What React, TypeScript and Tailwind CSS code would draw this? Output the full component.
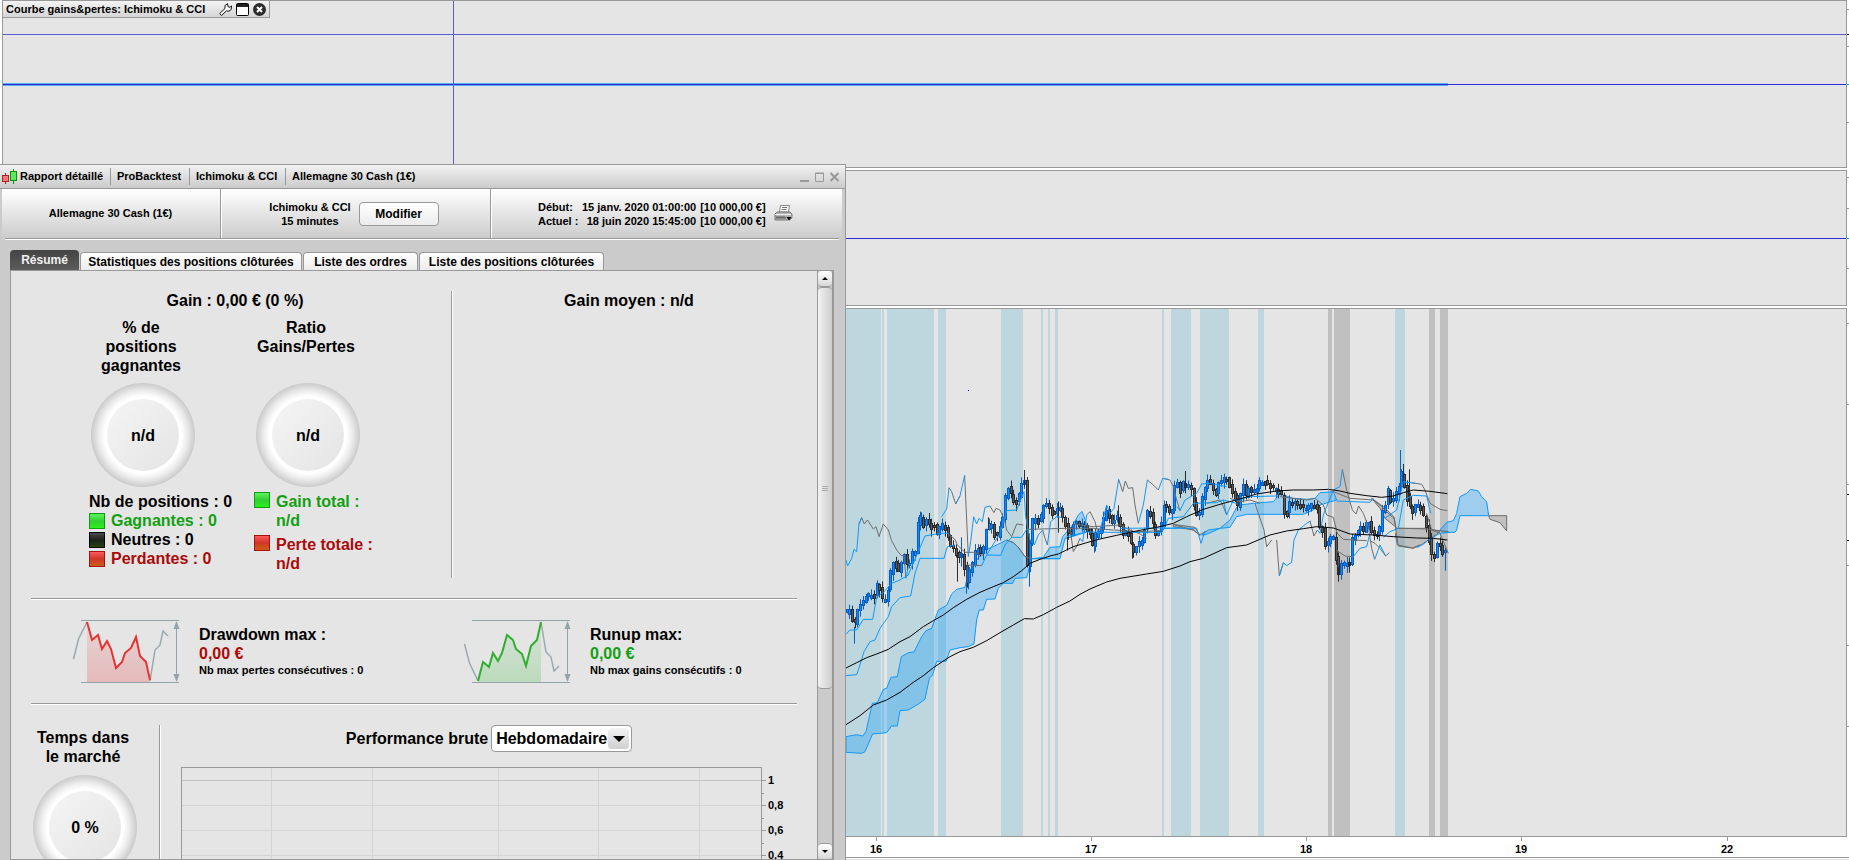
import { useState } from "react";

// Plot units of the price chart: three per pixel, both ways.
const BLUE_BANDS = [
  [0, 123], [126, 132], [141, 282], [294, 318], [483, 549], [603, 609], [624, 630], [645, 654],
  [966, 972], [993, 1053], [1080, 1167], [1254, 1272], [1665, 1695],
];
const GREY_BANDS = [[1464, 1476], [1482, 1530], [1767, 1785], [1800, 1824]];

const PRICES = [
  [20, 940], [28, 930], [36, 950], [43, 982], [52, 940], [58, 910], [68, 912], [75, 890], [95, 888], [104, 888],
  [110, 855], [118, 860], [125, 895], [133, 905], [140, 895], [147, 850], [155, 800], [162, 785], [170, 800],
  [178, 815], [186, 785], [195, 768], [203, 798], [212, 785], [220, 750], [228, 758], [234, 678], [243, 650],
  [250, 675], [262, 660], [272, 680], [285, 682], [295, 705], [303, 675], [313, 672], [322, 705], [332, 735],
  [342, 750], [350, 768], [362, 765], [370, 770], [375, 820], [381, 845], [390, 815], [400, 782], [410, 745],
  [420, 755], [432, 745], [438, 690], [447, 680], [455, 675], [465, 710], [475, 705], [483, 670], [492, 635],
  [500, 560], [510, 570], [518, 600], [527, 612], [537, 590], [545, 555], [552, 522], [557, 590], [562, 795],
  [568, 780], [574, 650], [582, 672], [590, 650], [598, 672], [605, 640], [610, 615], [630, 622], [640, 650],
  [648, 635], [656, 620], [665, 640], [673, 660], [682, 690], [690, 718], [698, 672], [715, 670], [735, 685],
  [748, 690], [757, 738], [765, 710], [775, 700], [785, 680], [793, 655], [802, 628], [812, 660], [820, 675],
  [830, 645], [838, 670], [850, 700], [862, 695], [872, 725], [880, 758], [890, 740], [900, 730], [910, 722],
  [918, 665], [924, 630], [935, 650], [943, 690], [948, 705], [958, 690], [966, 668], [971, 615], [985, 630],
  [995, 645], [1002, 580], [1010, 538], [1020, 575], [1033, 540], [1040, 565], [1053, 558], [1062, 610],
  [1075, 665], [1083, 610], [1092, 582], [1102, 538], [1115, 560], [1127, 580], [1140, 540], [1165, 540],
  [1175, 575], [1188, 600], [1197, 630], [1207, 538], [1218, 588], [1228, 565], [1248, 578], [1255, 550],
  [1280, 548], [1295, 565], [1310, 570], [1325, 585], [1330, 635], [1340, 645], [1348, 608], [1370, 612],
  [1395, 625], [1408, 625], [1418, 610], [1432, 630], [1440, 682], [1450, 690], [1456, 740], [1466, 722],
  [1482, 710], [1488, 765], [1495, 830], [1505, 790], [1515, 797], [1530, 788], [1537, 720], [1548, 705],
  [1557, 680], [1570, 690], [1585, 665], [1595, 690], [1602, 705], [1618, 705], [1625, 642], [1635, 625],
  [1643, 568], [1655, 610], [1665, 580], [1675, 580], [1683, 510], [1692, 550], [1700, 590], [1710, 620],
  [1720, 640], [1730, 615], [1745, 625], [1755, 660], [1765, 700], [1773, 755], [1782, 780], [1790, 738],
  [1800, 735], [1810, 760], [1825, 755],
];

const LONG_WICKS = [
  [43, 980, 1031, "#0a5cc0"], [244, 637, 660, "#0a5cc0"], [353, 760, 845, "#2b2b2b"], [364, 712, 800, "#0a5cc0"],
  [379, 800, 881, "#0a5cc0"], [386, 800, 868, "#0a5cc0"], [445, 652, 690, "#2b2b2b"], [553, 510, 560, "#2b2b2b"],
  [568, 700, 860, "#0a5cc0"], [655, 604, 698, "#2b2b2b"], [683, 690, 752, "#2b2b2b"], [763, 700, 758, "#0a5cc0"],
  [836, 616, 680, "#2b2b2b"], [878, 740, 776, "#2b2b2b"], [1036, 513, 560, "#2b2b2b"], [1495, 800, 845, "#2b2b2b"],
  [1528, 780, 818, "#2b2b2b"], [1681, 450, 520, "#0a5cc0"], [1690, 492, 560, "#2b2b2b"],
  [1708, 508, 600, "#2b2b2b"], [1816, 760, 812, "#0a5cc0"],
];

const GREY_LINES = [
  "57,672 65,653 73,672 82,660 100,687 108,680 117,710 130,672 145,690 155,722 170,750 185,768 192,765 198,835",
  "327,563 335,575 347,612 360,588",
  "374,526 385,770",
  "322,700 345,718 352,735 375,757 400,757",
  "380,795 425,797",
  "400,757 430,766",
  "450,618 462,638 468,625 480,630 492,655 500,690 515,710 530,672 550,675",
  "500,720 520,728 535,742 555,770 575,776",
  "560,688 680,685 760,685 820,690 900,695 960,692",
  "608,690 615,715 622,735",
  "690,685 700,755 712,735 720,715",
  "740,645 750,635 765,665 775,705",
  "836,538 848,575 856,543 865,565 878,563 885,615 895,670",
  "700,672 760,680 840,675 870,690 900,702 920,715",
  "922,540 940,555 955,570",
  "968,535 990,540 1000,560 1010,600 1020,632",
  "1005,675 1030,682 1060,690 1078,705 1100,693",
  "1100,610 1140,600 1150,620 1160,645",
  "1170,595 1200,605 1230,600 1260,610",
  "1245,610 1255,640 1272,690 1280,740 1295,720",
  "1310,720 1318,828 1330,788",
  "1410,663 1422,708 1432,690",
  "1320,590 1360,595 1400,600 1425,595 1450,615 1460,645 1480,652 1492,700 1510,718 1580,722",
  "1488,750 1515,768 1540,770",
  "1507,508 1520,570 1537,630 1548,642 1556,618 1570,640 1585,680 1595,745 1604,778",
  "1590,722 1605,730 1620,745 1637,768 1648,758",
  "1480,575 1530,595 1600,600 1625,620 1650,645 1662,655 1668,685 1690,685 1760,687 1825,695",
  "1715,548 1745,553 1755,570 1770,610 1800,628 1822,632",
  "1760,640 1775,690 1800,700 1825,760",
  "1666,700 1672,735 1718,744 1740,735",
];

const BLUE_LINES = [
  "18,780 23,798 35,775 42,748 50,755 57,672 65,653",
  "305,650 320,627 327,563",
  "347,612 360,588 374,526",
  "385,770 392,725 401,650 410,672 417,655 427,665 435,622 450,618",
  "18,1127 50,1124 60,1095 72,1055 90,1025 105,1020 120,985 145,950 155,920 180,893 212,888 225,820 240,775 312,775 322,740 345,735",
  "18,1003 30,990 50,990 70,958 98,958 110,892 130,877 155,850 180,840 205,825 215,800 235,755 255,708 300,700 325,700",
  "198,835 205,800 228,780",
  "425,797 440,765 482,766 495,735 515,712 545,712 560,688",
  "440,765 480,700 500,632 530,630 552,575 557,650 570,720 583,735 595,705 608,690",
  "622,735 632,665 650,650 665,652",
  "575,776 660,776",
  "680,710 740,696 820,697 965,697 970,686 1020,684",
  "720,715 728,725 740,645",
  "775,705 790,655 800,615 810,640 822,625 836,538",
  "895,670 910,615 922,540",
  "955,570 968,535 985,538",
  "970,690 985,655 1030,650 1060,610 1130,608 1150,600 1190,610",
  "840,685 960,684 1070,685 1083,730 1095,693",
  "1150,600 1160,645 1180,600 1200,600 1225,590 1310,588 1320,575",
  "1010,620 1020,632 1035,600 1070,580 1085,552 1110,550 1160,560",
  "1318,828 1330,788 1340,797 1355,787 1362,720 1375,690 1400,670 1412,663",
  "1432,690 1440,700 1450,645 1480,570 1500,560 1507,508",
  "1490,603 1590,607 1600,595",
  "1540,770 1560,745 1580,740 1590,700",
  "1604,778 1620,735 1637,768",
  "1630,712 1650,695 1675,685 1690,600 1720,586 1760,588 1772,640",
  "1635,655 1670,630 1690,545 1725,550",
  "1730,743 1750,733 1765,720 1800,700 1830,697",
];

const BLUE_CLOUDS = [
  "18,1310 50,1304 68,1308 78,1295 97,1210 112,1208 130,1168 140,1165 153,1132 172,1130 184,1070 205,1058 222,1056 245,1010 258,992 275,985 295,930 320,916 335,882 350,868 375,862 385,820 400,795 430,752 460,740 500,720 520,728 535,742 555,770 575,776 560,833 525,835 518,850 490,850 475,865 465,897 440,898 430,930 418,930 410,960 402,1032 385,1040 360,1043 330,1050 318,1084 290,1084 278,1125 268,1135 255,1198 235,1212 205,1230 180,1232 172,1278 155,1278 140,1298 98,1302 75,1355 65,1360 18,1357",
  "575,776 610,772 630,742 660,740 668,710 685,690 700,672 715,645 726,634 738,665 740,696 690,712 675,715 660,776",
  "1085,705 1105,690 1140,685 1170,660 1190,622 1200,615 1240,610 1300,605 1320,582 1360,595 1400,598 1425,595 1440,578 1480,575 1490,600 1440,615 1420,630 1390,643 1220,643 1190,650 1170,682 1140,685 1095,705",
  "1800,690 1820,667 1840,662 1850,640 1860,590 1880,580 1892,568 1915,573 1925,590 1940,605 1946,647 1860,647 1850,690 1845,697 1810,697",
];
const GREY_CLOUDS = [
  "1595,595 1630,620 1662,650 1668,685 1760,685 1800,695 1765,720 1745,733 1720,745 1675,738 1666,680 1635,655 1620,625",
  "1000,673 1065,682 1080,706 1060,690 1000,680",
  "1946,647 2000,647 2000,693 1980,668 1950,658",
];

const UPPER_MA =
  "18,1104 50,1088 80,1073 110,1062 145,1048 180,1025 210,1010 250,980 280,962 310,945 340,923 380,898 420,877 460,860 490,848 520,830 545,812 570,790 600,778 630,768 655,762 700,740 740,728 780,717 830,706 870,697 905,690 950,682 1000,670 1040,650 1090,628 1150,610 1200,597 1250,582 1310,573 1360,570 1420,570 1465,568 1500,573 1530,580 1580,587 1625,592 1660,588 1690,578 1720,570 1770,574 1822,581";
const LOWER_MA =
  "18,1274 60,1247 100,1215 140,1200 180,1177 220,1147 250,1127 280,1103 330,1070 360,1055 400,1042 440,1022 480,998 520,975 553,956 580,957 610,944 650,922 690,903 720,883 750,867 800,846 840,835 920,822 970,814 1020,798 1050,785 1090,775 1160,743 1220,735 1290,705 1340,693 1390,686 1430,680 1480,684 1530,702 1600,705 1660,710 1730,714 1780,715 1822,720";

const TABS = [
  { name: "Résumé", width: "w-[69px]" },
  { name: "Statistiques des positions clôturées", width: "w-[222px]" },
  { name: "Liste des ordres", width: "w-[115px]" },
  { name: "Liste des positions clôturées", width: "w-[185px]" },
];

function priceAt(x: number) {
  const i = PRICES.findIndex((p) => p[0] >= x);
  if (i <= 0) return PRICES[0][1];
  const [x0, y0] = PRICES[i - 1];
  const [x1, y1] = PRICES[i];
  return y0 + ((y1 - y0) * (x - x0)) / (x1 - x0);
}

// middle of the nearest screen pixel, keeps the candles sharp
const snap = (n: number) => Math.floor(n / 3) * 3 + 1.5;

const candles = Array.from({ length: 220 }, (_, i) => {
  const x = 21 + i * 8.2;
  const open = priceAt(x - 8.2) + (((i * 7) % 11) - 5);
  const close = priceAt(x) + (((i * 5) % 13) - 6);
  const top = Math.min(open, close);
  const bottom = Math.max(open, close);
  return {
    x: snap(x),
    up: close < open,
    top: snap(top - 3),
    bottom: snap(bottom + 3),
    high: top - 5 - ((i * 13) % 17),
    low: bottom + 5 + ((i * 11) % 19),
  };
});

function PriceChart() {
  return (
    <svg className="block h-full w-full" shapeRendering="crispEdges">
      <g transform="translate(837 -9) scale(0.33333)">
        {BLUE_BANDS.map(([a, b]) => (
          <rect key={a} x={a} y={27} width={b - a} height="2400" fill="#bed7de" />
        ))}
        {GREY_BANDS.map(([a, b]) => (
          <rect key={a} x={a} y={27} width={b - a} height="2400" fill="#c0c0c0" />
        ))}
      </g>
      <g transform="translate(837 -9) scale(0.33333)" fill="none" strokeWidth="3" shapeRendering="auto">
        {BLUE_CLOUDS.map((points) => (
          <polygon key={points} points={points} fill="#0099ff" fillOpacity=".31" stroke="#1098fa" />
        ))}
        {GREY_CLOUDS.map((points) => (
          <polygon key={points} points={points} fill="#606060" fillOpacity=".28" stroke="#6c6c6c" />
        ))}
        {candles.map((c) => (
          <g key={c.x} stroke={c.up ? "#0a5cc0" : "#2b2b2b"}>
            <path d={`M${c.x} ${c.high}V${c.low}`} />
            <rect x={c.x - 3} y={c.top} width="6" height={c.bottom - c.top} fill={c.up ? "#0a8bff" : "#5c5c5c"} />
          </g>
        ))}
        {LONG_WICKS.map(([x, y0, y1, color]) => (
          <path key={x} d={`M${snap(x as number)} ${y0}V${y1}`} stroke={color as string} />
        ))}
        {GREY_LINES.map((points) => (
          <polyline key={points} points={points} stroke="#6c6c6c" />
        ))}
        {BLUE_LINES.map((points) => (
          <polyline key={points} points={points} stroke="#1098fa" />
        ))}
        <polyline points={UPPER_MA} stroke="#000" />
        <polyline points={LOWER_MA} stroke="#000" />
        <rect x="384" y="270" width="3" height="3" fill="#0000ff" />
      </g>
    </svg>
  );
}

function ValueAxis({ ticks, offset }: { ticks: (number | string)[][]; offset: number }) {
  return (
    <svg className="h-full w-[2px] shrink-0" shapeRendering="crispEdges">
      {ticks.map(([y, color]) => (
        <rect key={y} y={(y as number) - offset} width="2" height="1" fill={color as string} />
      ))}
    </svg>
  );
}

function TimeAxis() {
  const days = [["16", 876], ["17", 1091], ["18", 1306], ["19", 1521], ["22", 1727]];
  return (
    <svg className="block h-5 w-full shrink-0 text-[11px] font-bold">
      {days.map(([day, x]) => (
        <g key={day}>
          <rect x={x} width="1" height="4" fill="#999" />
          <text x={x} y="16" textAnchor="middle">
            {day}
          </text>
        </g>
      ))}
    </svg>
  );
}

function Gauge({ label }: { label: string }) {
  return (
    <div className="flex h-[104px] w-[104px] items-center justify-center rounded-full bg-[radial-gradient(circle_closest-side,#fff_74%,#ececec_85%,#cacaca_100%)]">
      <div className="flex h-[72px] w-[72px] items-center justify-center rounded-full bg-linear-to-br from-[#f5f5f5] to-[#e4e4e4]">
        {label}
      </div>
    </div>
  );
}

const SWATCHES = {
  green: "border-[#129a12] bg-linear-to-b from-[#5df25d] via-[#2fd02f] to-[#2cf01c]",
  black: "border-black bg-linear-to-b from-[#4a4a4a] via-[#1c1f1a] to-[#24420f]",
  red: "border-[#a51212] bg-linear-to-b from-[#fb5a5a] via-[#cf3526] to-[#cc5c18]",
};

function Swatch({ color }: { color: keyof typeof SWATCHES }) {
  return <span className={`h-4 w-4 shrink-0 border ${SWATCHES[color]}`} />;
}

function RangeArrow() {
  return (
    <>
      <path d="M8 .5H106M8 62.500H106" stroke="#92a3aa" />
      <path d="M103.500 4V59" stroke="#92a3aa" />
      <path d="M103.500 1l3 8h-6zM103.500 62l3-8h-6z" fill="#92a3aa" />
    </>
  );
}

function DrawdownIcon() {
  return (
    <svg width="108" height="63" fill="none" className="shrink-0 overflow-visible">
      <defs>
        <linearGradient id="loss" x2="0" y2="1">
          <stop stopColor="#e53030" stopOpacity=".08" />
          <stop offset="1" stopColor="#e53030" stopOpacity=".24" />
        </linearGradient>
      </defs>
      <path d="M14 2l5 18 6-5 4 14 5-8 4 8 5 19 6-6 3-9 6-5 5-11 4 19 6 6 4 18V62H14z" fill="url(#loss)" />
      <path d="M.5 39l5-20L14 2M77 61l5-31 5-5 3-14 5 5" stroke="#9aa9af" strokeWidth="1.500" />
      <path d="M14 2l5 18 6-5 4 14 5-8 4 8 5 19 6-6 3-9 6-5 5-11 4 19 6 6 4 18" stroke="#e83232" strokeWidth="2" />
      <RangeArrow />
    </svg>
  );
}

function RunupIcon() {
  return (
    <svg width="108" height="63" fill="none" className="shrink-0 overflow-visible">
      <defs>
        <linearGradient id="win" x2="0" y2="1">
          <stop stopColor="#28b428" stopOpacity=".06" />
          <stop offset="1" stopColor="#28b428" stopOpacity=".22" />
        </linearGradient>
      </defs>
      <path d="M14 61l5-19 6 5 4-14 5 8 4-8 5-18 6 5 3 9 6 5 4 12 5-20 6-6 4-18V62H14z" fill="url(#win)" />
      <path d="M.5 24l5 19L14 61M77 2l5 30 5 5 3 14 5-5" stroke="#9aa9af" strokeWidth="1.500" />
      <path d="M14 61l5-19 6 5 4-14 5 8 4-8 5-18 6 5 3 9 6 5 4 12 5-20 6-6 4-18" stroke="#2fae2f" strokeWidth="2" />
      <RangeArrow />
    </svg>
  );
}

function PerformanceChart() {
  return (
    <div className="flex">
      <svg className="h-[160px] flex-1 border-t border-r border-l border-[#999]" shapeRendering="crispEdges">
        {[89, 190, 316, 416, 517].map((x) => (
          <rect key={x} x={x} width="1" height="160" fill="#d4d4d4" />
        ))}
        {[12, 37, 62, 87, 112].map((y, i) => (
          <rect key={y} y={y} width="100%" height="1" fill={i ? "#d4d4d4" : "#c4c4c4"} />
        ))}
      </svg>
      <svg className="h-[160px] w-[35px] text-[11px] font-bold">
        {["1", "0,8", "0,6", "0,4"].map((label, i) => (
          <g key={label}>
            <rect y={13 + i * 25} width="4" height="1" fill="#999" />
            <rect y={26 + i * 25} width="2" height="1" fill="#999" />
            <text x="6" y={17 + i * 25}>
              {label}
            </text>
          </g>
        ))}
      </svg>
    </div>
  );
}

function ScrollBar() {
  return (
    <div className="flex w-[15px] shrink-0 flex-col border-l border-[#999] bg-[#cbcbcb]">
      <button
        aria-label="Monter"
        className="flex h-4 items-center justify-center rounded-sm border-b border-[#999] bg-linear-to-b from-white to-[#d8d8d8]"
      >
        <svg width="6" height="3"><path d="M3 0l3 3H0z" /></svg>
      </button>
      <div className="flex h-[402px] items-center justify-center rounded-sm border-t border-b border-[#999] bg-linear-to-r from-[#f2f2f2] to-[#cdcdcd]">
        <svg width="6" height="5"><path d="M0 .5h6M0 2.500h6M0 4.500h6" stroke="#aaa" /></svg>
      </div>
      <div className="flex-1" />
      <button
        aria-label="Descendre"
        className="flex h-4 items-center justify-center rounded-sm border-t border-[#999] bg-linear-to-b from-white to-[#d8d8d8]"
      >
        <svg width="6" height="3"><path d="M3 3l3-3H0z" /></svg>
      </button>
    </div>
  );
}

function Summary() {
  const [period, setPeriod] = useState("Hebdomadaire");

  return (
    <div className="min-w-0 flex-1 overflow-hidden px-5 pt-5 text-base leading-[19px] font-bold">
      <div className="flex h-[287px]">
        <div className="w-[421px] border-r border-[#999]">
          <h2 className="pr-3 text-center">Gain : 0,00 € (0 %)</h2>
          <div className="mt-2 grid grid-cols-[165px_165px] pl-[58px]">
            <div>
              <div className="flex h-[169px] w-[108px] flex-col items-center justify-between text-center">
                <h3 className="pr-1">% de positions gagnantes</h3>
                <Gauge label="n/d" />
              </div>
              <p className="mt-[5px] whitespace-nowrap">Nb de positions : 0</p>
              <p className="flex items-center gap-[6px] text-[#12a012]"><Swatch color="green" />Gagnantes : 0</p>
              <p className="flex items-center gap-[6px]"><Swatch color="black" />Neutres : 0</p>
              <p className="flex items-center gap-[6px] text-[#aa0a0a]"><Swatch color="red" />Perdantes : 0</p>
            </div>
            <div>
              <div className="flex h-[169px] w-[108px] flex-col items-center justify-between text-center">
                <h3 className="pr-1">Ratio Gains/Pertes</h3>
                <Gauge label="n/d" />
              </div>
              <p className="mt-[5px] flex gap-[6px] text-[#12a012]">
                <Swatch color="green" /><span>Gain total :<br />n/d</span>
              </p>
              <p className="mt-[5px] flex gap-[6px] text-[#aa0a0a]">
                <Swatch color="red" /><span>Perte totale :<br />n/d</span>
              </p>
            </div>
          </div>
        </div>
        <div className="flex-1 border-l border-white">
          <h2 className="pl-2 text-center">Gain moyen : n/d</h2>
        </div>
      </div>

      <div className="mt-5 grid h-[106px] grid-cols-[391px_1fr] items-start border-t border-b border-[#999] pt-[21px] pl-[42px] shadow-[0_1px_0_#fff,inset_0_1px_0_#fff]">
        <div className="flex gap-[18px]">
          <DrawdownIcon />
          <div className="pt-[5px] whitespace-nowrap">
            <p>Drawdown max :</p>
            <p className="text-[#aa0a0a]">0,00 €</p>
            <p className="text-[11px] leading-[14px]">Nb max pertes consécutives : 0</p>
          </div>
        </div>
        <div className="flex gap-[18px]">
          <RunupIcon />
          <div className="pt-[5px] whitespace-nowrap">
            <p>Runup max:</p>
            <p className="text-[#12a012]">0,00 €</p>
            <p className="text-[11px] leading-[14px]">Nb max gains consécutifs : 0</p>
          </div>
        </div>
      </div>

      <div className="mt-[21px] flex">
        <div className="flex w-[129px] flex-col gap-[9px] border-r border-[#999] pt-[3px] pb-10">
          <h3 className="pr-6 text-center">Temps dans le marché</h3>
          <div className="pl-[2px]"><Gauge label="0 %" /></div>
        </div>
        <div className="flex-1 border-l border-white pl-5">
          <div className="flex items-center justify-center gap-[3px]">
            <label htmlFor="period">Performance brute</label>
            <div className="relative">
              <select
                id="period"
                value={period}
                onChange={(e) => setPeriod(e.target.value)}
                className="h-[27px] w-[141px] appearance-none rounded border border-[#999] bg-white pl-1 font-bold"
              >
                <option>Hebdomadaire</option>
                <option>Mensuelle</option>
              </select>
              <span className="pointer-events-none absolute top-[3px] right-[3px] flex h-[21px] w-[21px] items-center justify-center rounded-sm bg-linear-to-b from-[#f4f4f4] to-[#cfcfcf]">
                <svg width="12" height="6"><path d="M0 0h12L6 6z" /></svg>
              </span>
            </div>
          </div>
          <div className="mt-[15px]"><PerformanceChart /></div>
        </div>
      </div>
    </div>
  );
}

function ReportWindow() {
  const [tab, setTab] = useState("Résumé");

  return (
    <section className="absolute top-[164px] bottom-0 left-0 flex w-[846px] flex-col border-t border-r border-[#999] bg-[#cbcbcb] text-[11px] font-bold">
      <header className="flex h-6 items-center border-b border-[#999] bg-linear-to-b from-[#f2f2f2] to-[#cbcbcb] pr-[6px] pl-[2px]">
        <svg width="16" height="17" className="mr-[2px]">
          <path d="M3.500 5V16" stroke="#b02020" />
          <path d="M11.500 1V16" stroke="#0c8c0c" />
          <rect x=".5" y="7.500" width="6" height="6" fill="#f27c7c" stroke="#b02020" />
          <rect x="8.500" y="3.500" width="6" height="9" fill="#5fe85f" stroke="#0c8c0c" />
        </svg>
        <h1 className="flex flex-1">
          <span className="w-[90px]">Rapport détaillé</span>
          <span className="w-[79px] border-l border-[#999] pl-[6px]">ProBacktest</span>
          <span className="w-[96px] border-l border-[#999] pl-[6px]">Ichimoku &amp; CCI</span>
          <span className="border-l border-[#999] pl-[6px]">Allemagne 30 Cash (1€)</span>
        </h1>
        <div className="flex gap-[6px]">
          <button aria-label="Réduire">
            <svg width="9" height="10"><path d="M0 9h9" stroke="#999" strokeWidth="2" /></svg>
          </button>
          <button aria-label="Agrandir">
            <svg width="9" height="10" fill="none" stroke="#999"><path d="M.5 1.500h8v8h-8zM0 1h9" /></svg>
          </button>
          <button aria-label="Fermer">
            <svg width="9" height="10"><path d="M.5 1l8 8m0-8l-8 8" stroke="#999" strokeWidth="2" /></svg>
          </button>
        </div>
      </header>

      <div className="mr-[3px] ml-[2px] bg-linear-to-b from-white to-[#cbcbcb] px-[3px]">
        <div className="flex h-[50px] border-b border-[#999] shadow-[0_1px_0_#fff]">
          <div className="flex w-[216px] items-center justify-center border-r border-[#999] pr-1">
            Allemagne 30 Cash (1€)
          </div>
          <div className="flex w-[270px] items-center justify-center gap-2 border-r border-l border-r-[#999] border-l-white pr-1">
            <p className="text-center leading-[14px]">Ichimoku &amp; CCI<br />15 minutes</p>
            <button className="h-6 w-20 rounded border border-[#999] bg-linear-to-b from-white to-[#ececec] text-xs">
              Modifier
            </button>
          </div>
          <div className="flex flex-1 items-center gap-2 border-l border-white pl-[46px]">
            <dl className="grid grid-cols-[40px_1fr_auto] gap-x-1 leading-[14px] whitespace-pre">
              <dt>Début:</dt>
              <dd className="text-right">15 janv. 2020 01:00:00</dd>
              <dd>[10 000,00 €]</dd>
              <dt>Actuel :</dt>
              <dd className="text-right">18 juin 2020 15:45:00</dd>
              <dd>[10 000,00 €]</dd>
            </dl>
            <button aria-label="Imprimer">
              <svg width="19" height="17" fill="none">
                <path d="M5.500 7L6.500.5h9L14.500 7z" fill="#fff" stroke="#888" />
                <path d="M8 2.500h5M7.500 4.500h5" stroke="#777" />
                <path d="M3 7h13l2 2v4l-2 2H1V9z" fill="#b5b5b5" stroke="#777" />
                <path d="M1 9.500h16" stroke="#eee" />
                <path d="M2 12.500h10" stroke="#666" strokeWidth="2" />
                <path d="M11.500 11.500h7L15 16z" fill="#000" stroke="#fff" strokeWidth=".5" />
              </svg>
            </button>
          </div>
        </div>
      </div>

      <div role="tablist" className="mt-[11px] ml-[10px] flex h-5 items-end">
        {TABS.map(({ name, width }) => (
          <button
            key={name}
            role="tab"
            aria-selected={tab === name}
            onClick={() => setTab(name)}
            className={`${width} mr-px rounded-t text-xs whitespace-nowrap ${
              tab === name
                ? "h-5 bg-linear-to-b from-[#444] to-[#5c5c5c] text-[#f0f0f0]"
                : "h-[18px] border-t border-r border-l border-[#999] bg-linear-to-b from-white to-[#ececec]"
            }`}
          >
            {name}
          </button>
        ))}
      </div>

      <div className="mr-[11px] ml-[10px] flex min-h-0 flex-1 border border-r-2 border-[#999] bg-[#e5e5e5]">
        <Summary />
        <ScrollBar />
      </div>
    </section>
  );
}

export default function App() {
  return (
    <main className="relative flex h-screen flex-col overflow-hidden bg-white font-['Liberation_Sans',Arial,sans-serif] text-black">
      <section className="flex h-[168px] shrink-0 pl-[2px]">
        <div className="relative flex-1 border border-[#999] bg-[#e5e5e5]">
          <svg className="block h-full w-full" shapeRendering="crispEdges">
            <rect y="82" width="1445" height="3" fill="#5aaeea" />
            <rect y="83" width="100%" height="1" fill="#2d2ddc" />
            <rect y="33" width="100%" height="1" fill="#5c5cd2" />
            <rect x="450" width="1" height="100%" fill="#5c5cd2" />
          </svg>
          <div className="absolute top-0 left-0 flex h-[17px] items-center gap-1 border-r border-b border-[#999] bg-linear-to-b from-[#f4f4f4] to-[#d6d6d6] px-[3px] text-[11px] font-bold">
            <h2 className="w-[209px]">Courbe gains&amp;pertes: Ichimoku &amp; CCI</h2>
            <button aria-label="Configurer">
              <svg width="13" height="13" fill="#fff" stroke="#111">
                <path d="M.7 10.500L6 5.500V2.500L8.500.7l.5 3 2 .6 1.500-1.500-.3 3.700-2.200 1.700-2.500-.3-5 4.600z" />
              </svg>
            </button>
            <button aria-label="Agrandir le graphique">
              <svg width="13" height="13">
                <rect x=".5" y=".5" width="12" height="12" rx="1" fill="#fff" stroke="#000" />
                <path d="M1 1h11v3H1z" fill="#222" />
              </svg>
            </button>
            <button aria-label="Fermer le graphique">
              <svg width="13" height="13">
                <circle cx="6.500" cy="6.500" r="6.500" fill="#2c2c2c" />
                <path d="M4 4l5 5m0-5L4 9" stroke="#fff" strokeWidth="2" />
              </svg>
            </button>
          </div>
        </div>
        <ValueAxis offset={0} ticks={[[9, "#999"], [34, "#000"], [46, "#999"], [84, "#09f"], [122, "#999"]]} />
      </section>

      <section className="mt-[2px] flex h-[136px] shrink-0 pl-[2px]">
        <div className="flex-1 border border-[#999] bg-[#e5e5e5]">
          <svg className="block h-full w-full" shapeRendering="crispEdges">
            <rect y="67" width="100%" height="1" fill="#2d2ddc" />
          </svg>
        </div>
        <ValueAxis offset={170} ticks={[[177, "#999"], [208, "#999"], [238, "#09f"], [268, "#999"]]} />
      </section>

      <section className="mt-[2px] flex min-h-0 flex-1 pl-[2px]">
        <div className="min-h-0 flex-1 border border-[#999] bg-[#e5e5e5]">
          <PriceChart />
        </div>
        <ValueAxis
          offset={308}
          ticks={[
            [323, "#999"], [404, "#999"], [484, "#999"], [494, "#000"],
            [540, "#000"], [565, "#999"], [645, "#999"], [726, "#999"],
          ]}
        />
      </section>
      <TimeAxis />
      <footer className="h-[3px] shrink-0 border-t border-b border-t-[#999] border-b-[#e5e5e5]" />

      <ReportWindow />
    </main>
  );
}
